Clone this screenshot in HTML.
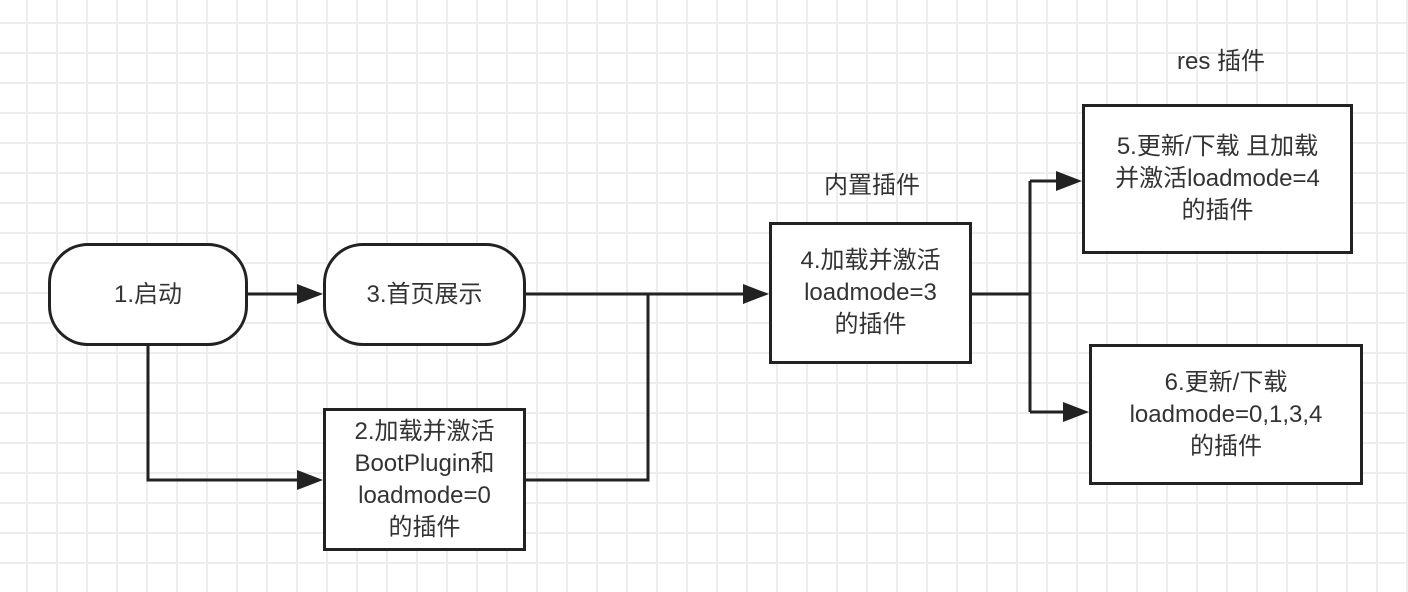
<!DOCTYPE html>
<html><head><meta charset="utf-8"><style>
body{margin:0;width:1408px;height:592px;overflow:hidden;background:#fff;
background-image:linear-gradient(#ededed 2px,transparent 2px),linear-gradient(90deg,#ededed 2px,transparent 2px);
background-size:30px 30px;background-position:-4px 22px,26px 0;
font-family:"Liberation Sans","Noto Sans CJK SC",sans-serif;}
.b{position:absolute;box-sizing:border-box;border:3px solid #222;background:#fff;display:flex;align-items:center;justify-content:center;text-align:center;font-size:24px;line-height:32px;color:#333}
.t{position:absolute;font-size:24px;color:#333}
svg{position:absolute;left:0;top:0}
</style></head><body>
<svg width="1408" height="592">
<g stroke="#222" stroke-width="3" fill="none">
<path d="M247 294H310M148 345V480H310M525 294H756M525 480H648V294M971 294H1030M1030 181V412M1030 181H1069M1030 412H1076"/>
</g>
<g fill="#222">
<path d="M323 294l-26-10v20z"/><path d="M323 480l-26-10v20z"/><path d="M769 294l-26-10v20z"/>
<path d="M1082 181l-26-10v20z"/><path d="M1089 412l-26-10v20z"/>
</g>
</svg>
<div class="b" style="left:48px;top:243px;width:200px;height:103px;border-radius:40px">1.启动</div>
<div class="b" style="left:323px;top:243px;width:203px;height:103px;border-radius:40px">3.首页展示</div>
<div class="b" style="left:323px;top:408px;width:203px;height:143px">2.加载并激活<br>BootPlugin和<br>loadmode=0<br>的插件</div>
<div class="b" style="left:769px;top:222px;width:203px;height:142px">4.加载并激活<br>loadmode=3<br>的插件</div>
<div class="b" style="left:1082px;top:104px;width:271px;height:150px">5.更新/下载 且加载<br>并激活loadmode=4<br>的插件</div>
<div class="b" style="left:1089px;top:344px;width:274px;height:141px">6.更新/下载<br>loadmode=0,1,3,4<br>的插件</div>
<div class="t" style="left:824px;top:165px">内置插件</div>
<div class="t" style="left:1177px;top:41px">res 插件</div>
</body></html>
